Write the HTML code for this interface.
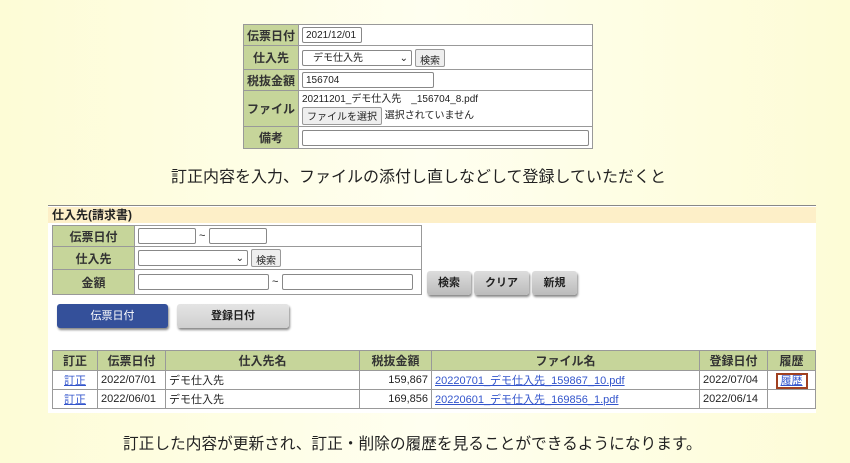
<!DOCTYPE html><html><head><meta charset="utf-8"><style>
*{margin:0;padding:0;box-sizing:border-box}
body{width:850px;height:463px;overflow:hidden;background:linear-gradient(90deg,#fdfcd6,#fffff0 50%,#fdfcd6);font-family:"Liberation Sans","Noto Sans CJK JP",sans-serif;font-size:11px;color:#222;position:relative}
.a{position:absolute}
table{border-collapse:collapse;position:absolute;background:#fff}
td{border:1px solid #999;padding:0 3px;height:100%}
.l{background:#c6d59a;font-weight:bold;text-align:center;color:#333;font-size:12px}
.in{display:inline-block;border:1px solid #888;border-radius:2px;background:#fff;height:16px;vertical-align:middle;font-size:10px;padding:1px 3px;line-height:13px}
.btn{display:inline-block;border:1px solid #999;border-radius:2px;background:#eee;height:18px;font-size:10px;padding:2px 4px;vertical-align:middle}
.gb{position:absolute;background:linear-gradient(#ddd,#bbb);border-radius:3px;box-shadow:1px 2px 2px #888;font-weight:bold;font-size:11px;text-align:center;line-height:24px;color:#222}
a{color:#3355cc;text-decoration:underline}
.r td{height:19px}
</style></head><body>
<table style="left:243px;top:24px;width:350px">
<tr style="height:21px"><td class="l" style="width:55px">伝票日付</td><td><span class="in" style="width:60px">2021/12/01</span></td></tr>
<tr style="height:24px"><td class="l">仕入先</td><td><span class="in" style="width:110px;padding-left:10px">デモ仕入先 <span style="float:right">⌄</span></span> <span class="btn">検索</span></td></tr>
<tr style="height:21px"><td class="l">税抜金額</td><td><span class="in" style="width:132px">156704</span></td></tr>
<tr style="height:36px"><td class="l">ファイル</td><td style="font-size:10px;line-height:15px">20211201_デモ仕入先　_156704_8.pdf<br><span class="btn">ファイルを選択</span> 選択されていません</td></tr>
<tr style="height:22px"><td class="l">備考</td><td><span class="in" style="width:287px"></span></td></tr>
</table>
<div class="a" style="left:171px;top:163px;font-size:16px;white-space:nowrap">訂正内容を入力、ファイルの添付し直しなどして登録していただくと</div>
<div class="a" style="left:48px;top:205px;width:768px;height:208px;background:#fff;border-top:1px solid #888"></div>
<div class="a" style="left:48px;top:207px;width:768px;height:16px;background:#fdefc8;font-weight:bold;font-size:12px;padding-left:4px;line-height:16px">仕入先(請求書)</div>
<table style="left:52px;top:225px;width:370px">
<tr style="height:21px"><td class="l" style="width:82px">伝票日付</td><td><span class="in" style="width:58px"></span> ~ <span class="in" style="width:58px"></span></td></tr>
<tr style="height:23px"><td class="l">仕入先</td><td><span class="in" style="width:110px"><span style="float:right">⌄</span></span> <span class="btn">検索</span></td></tr>
<tr style="height:25px"><td class="l">金額</td><td><span class="in" style="width:131px"></span> ~ <span class="in" style="width:131px"></span></td></tr>
</table>
<div class="gb" style="left:427px;top:271px;width:44px">検索</div>
<div class="gb" style="left:474px;top:271px;width:55px">クリア</div>
<div class="gb" style="left:532px;top:271px;width:45px">新規</div>
<div class="gb" style="left:57px;top:304px;width:111px;background:#34509a;color:#fff;font-weight:normal">伝票日付</div>
<div class="gb" style="left:177px;top:304px;width:112px;background:linear-gradient(#e4e4e4,#cfcfcf)">登録日付</div>
<table class="r" style="left:52px;top:350px;width:764px">
<tr style="height:20px"><td class="l" style="width:45px">訂正</td><td class="l" style="width:68px">伝票日付</td><td class="l" style="width:194px">仕入先名</td><td class="l" style="width:72px">税抜金額</td><td class="l" style="width:268px">ファイル名</td><td class="l" style="width:68px">登録日付</td><td class="l">履歴</td></tr>
<tr><td style="text-align:center"><a>訂正</a></td><td>2022/07/01</td><td>デモ仕入先</td><td style="text-align:right">159,867</td><td><a>20220701_デモ仕入先_159867_10.pdf</a></td><td>2022/07/04</td><td style="text-align:center"><a style="border:2px solid #a04020;padding:0 3px">履歴</a></td></tr>
<tr><td style="text-align:center"><a>訂正</a></td><td>2022/06/01</td><td>デモ仕入先</td><td style="text-align:right">169,856</td><td><a>20220601_デモ仕入先_169856_1.pdf</a></td><td>2022/06/14</td><td></td></tr>
</table>
<div class="a" style="left:123px;top:431px;font-size:15.7px;white-space:nowrap">訂正した内容が更新され、訂正・削除の履歴を見ることができるようになります。</div>
</body></html>
